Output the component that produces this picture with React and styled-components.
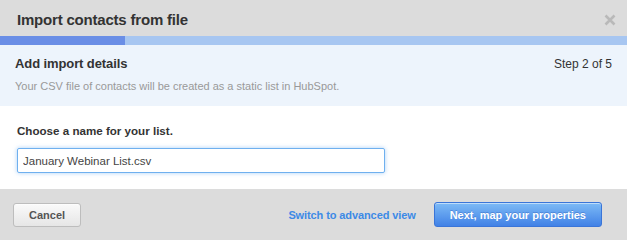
import React, { useState } from "react";
import styled, { createGlobalStyle } from "styled-components";

const Global = createGlobalStyle`
  html, body {
    margin: 0;
    padding: 0;
    background: #ffffff;
  }
  body {
    font-family: "Liberation Sans", Arial, Helvetica, sans-serif;
    -webkit-font-smoothing: antialiased;
  }
`;

const Dialog = styled.div`
  width: 627px;
  height: 240px;
  display: flex;
  flex-direction: column;
  overflow: hidden;
  background: #fff;
`;

const Header = styled.div`
  height: 36px;
  background: #dcdcdc;
  display: flex;
  align-items: center;
  justify-content: space-between;
  padding: 0 10px 0 17px;
  box-sizing: border-box;
`;

const Title = styled.h1`
  margin: 0;
  font-size: 15px;
  letter-spacing: -0.2px;
  font-weight: 700;
  color: #333;
  padding-top: 2px;
`;

const Close = styled.button`
  border: 0;
  background: none;
  padding: 0;
  width: 14px;
  height: 14px;
  display: flex;
  align-items: center;
  justify-content: center;
  cursor: pointer;
  margin-top: 4px;
`;

const Progress = styled.div`
  height: 9px;
  background: #a7c6f1;
  display: flex;
`;

const ProgressFill = styled.div`
  background: #6a8ee6;
  height: 100%;
`;

const Intro = styled.div`
  background: #edf4fc;
  height: 61px;
  padding: 10px 15px 0 15px;
  box-sizing: border-box;
`;

const IntroTop = styled.div`
  display: flex;
  justify-content: space-between;
  align-items: baseline;
`;

const StepTitle = styled.h2`
  margin: 0;
  font-size: 13px;
  letter-spacing: -0.1px;
  font-weight: 700;
  color: #333;
  padding-top: 1px;
`;

const StepCount = styled.span`
  font-size: 12px;
  color: #333;
`;

const Note = styled.p`
  margin: 9px 0 0 0;
  font-size: 11px;
  color: #999;
`;

const Body = styled.div`
  flex: 0 0 83px;
  padding: 18px 17px 0 17px;
  box-sizing: border-box;
`;

const Label = styled.label`
  display: block;
  font-size: 11.6px;
  font-weight: 700;
  color: #333;
  margin-bottom: 11px;
`;

const Input = styled.input`
  width: 368px;
  height: 25px;
  box-sizing: border-box;
  border: 1px solid #6fb0ef;
  border-radius: 2px;
  box-shadow: 0 0 4px rgba(100, 170, 240, 0.55);
  padding: 0 5px;
  font-family: inherit;
  font-size: 11.5px;
  color: #444;
  outline: none;
`;

const Footer = styled.div`
  flex: 1;
  background: #dcdcdc;
  display: flex;
  align-items: center;
  padding: 0 25px 0 13px;
  box-sizing: border-box;
`;

const Button = styled.button`
  height: ${(p) => (p.$primary ? "25px" : "24px")};
  padding: 0 15px;
  border-radius: 3px;
  font-family: inherit;
  font-size: 11px;
  font-weight: 700;
  cursor: pointer;
  color: ${(p) => (p.$primary ? "#fff" : "#555")};
  border: 1px solid ${(p) => (p.$primary ? "#3a75d8" : "#bdbdbd")};
  background: ${(p) =>
    p.$primary
      ? "linear-gradient(#7dbbf6, #4181e6)"
      : "linear-gradient(#fafafa, #e6e6e6)"};
  text-shadow: ${(p) => (p.$primary ? "0 -1px 0 rgba(40,90,180,0.4)" : "none")};
  box-shadow: inset 0 1px 0 rgba(255, 255, 255, 0.5);
`;

const Spacer = styled.div`
  flex: 1;
`;

const Link = styled.a`
  font-size: 11px;
  letter-spacing: -0.1px;
  font-weight: 700;
  color: #3d8ae6;
  text-decoration: none;
  margin-right: 18px;
  cursor: pointer;
`;

export default function App() {
  const [name, setName] = useState("January Webinar List.csv");
  const step = 2;
  const total = 5;

  return (
    <Dialog>
      <Global />
      <Header>
        <Title>Import contacts from file</Title>
        <Close aria-label="Close">
          <svg width="12" height="12" viewBox="0 0 12 12">
            <path
              d="M1.5 1.5 L10.5 10.5 M10.5 1.5 L1.5 10.5"
              stroke="#b9b9b9"
              strokeWidth="2.6"
              strokeLinecap="butt"
            />
          </svg>
        </Close>
      </Header>
      <Progress>
        <ProgressFill style={{ width: `${(step / total) * 100 * 0.5}%` }} />
      </Progress>
      <Intro>
        <IntroTop>
          <StepTitle>Add import details</StepTitle>
          <StepCount>
            Step {step} of {total}
          </StepCount>
        </IntroTop>
        <Note>
          Your CSV file of contacts will be created as a static list in HubSpot.
        </Note>
      </Intro>
      <Body>
        <Label htmlFor="list-name">Choose a name for your list.</Label>
        <Input
          id="list-name"
          value={name}
          onChange={(e) => setName(e.target.value)}
        />
      </Body>
      <Footer>
        <Button>Cancel</Button>
        <Spacer />
        <Link>Switch to advanced view</Link>
        <Button $primary>Next, map your properties</Button>
      </Footer>
    </Dialog>
  );
}
